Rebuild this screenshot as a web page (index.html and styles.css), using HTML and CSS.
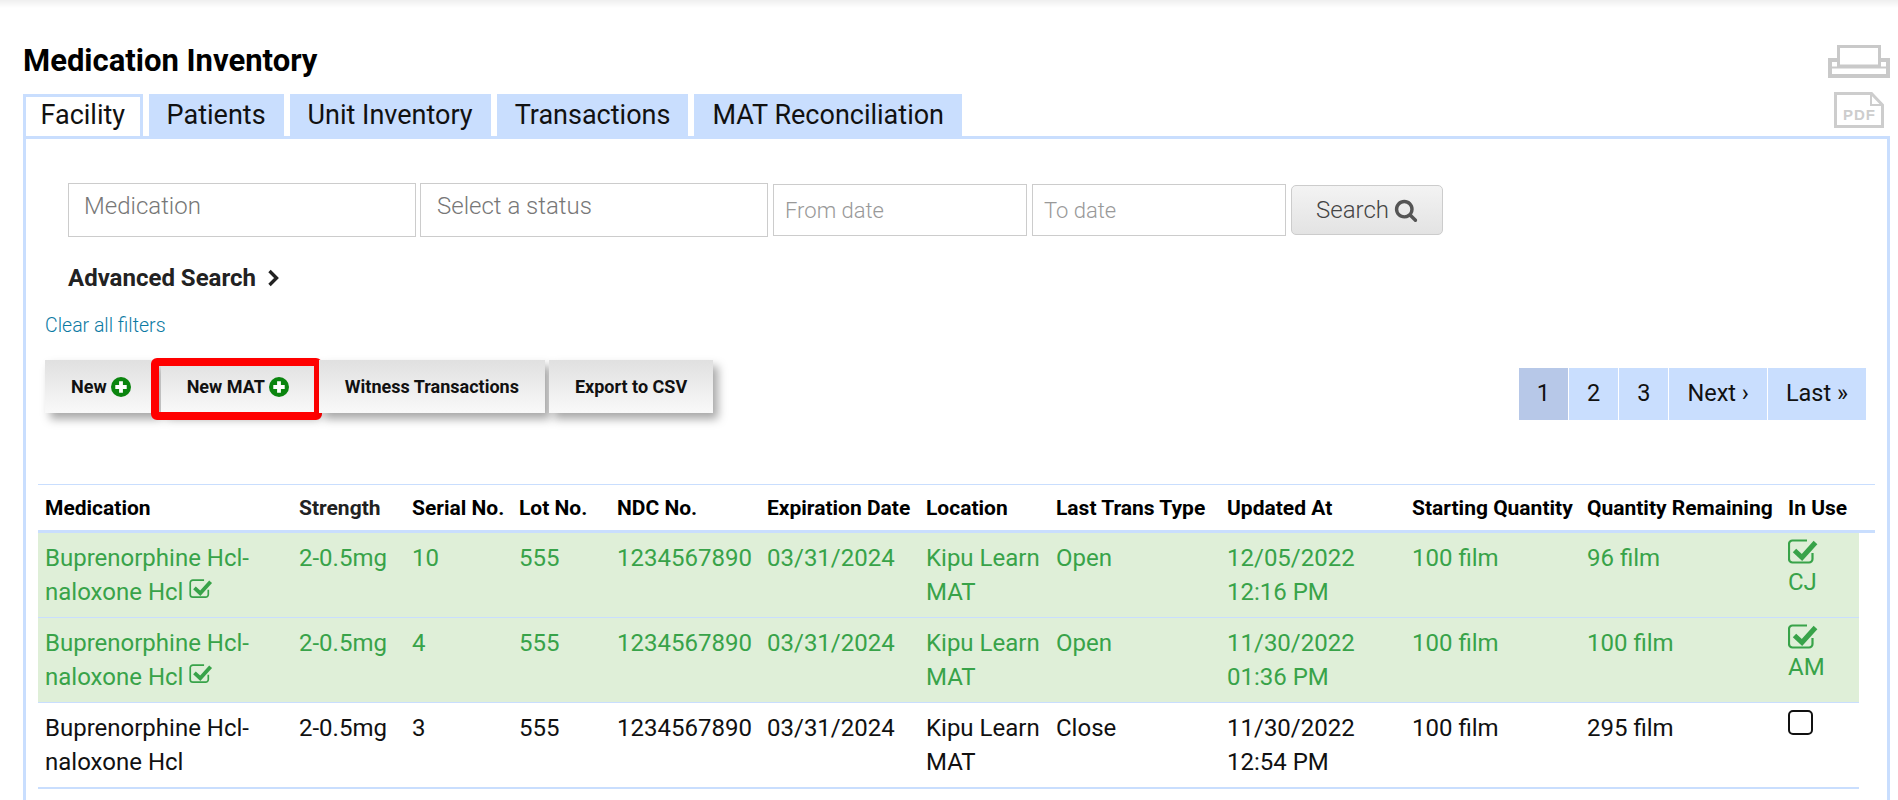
FILE: index.html
```html
<!DOCTYPE html>
<html lang="en">
<head>
<meta charset="utf-8">
<title>Medication Inventory</title>
<link rel="stylesheet" href="styles.css">
</head>
<body>
<svg class="defs" width="0" height="0" aria-hidden="true">
  <symbol id="check" viewBox="0 0 30 26">
    <path d="M24.5 14v6a3.5 3.5 0 0 1-3.5 3.5H4.500a3.500 3.500 0 0 1-3.500-3.500V5a3.500 3.500 0 0 1 3.500-3.500H19" fill="none" stroke="currentColor" stroke-width="2.200"/>
    <path d="M6.500 11.500l7.500 7L27.500 3.500" fill="none" stroke="currentColor" stroke-width="5"/>
  </symbol>
  <symbol id="plus" viewBox="0 0 21 21">
    <circle cx="10.500" cy="10.500" r="10.500" fill="#0b850f"/>
    <path d="M10.500 4.500v12M4.500 10.500h12" stroke="#fff" stroke-width="4"/>
  </symbol>
</svg>
<div class="shade"></div>
<main class="page">
  <header class="head">
    <div class="head-main">
      <h1 class="title">Medication Inventory</h1>
      <nav class="tabs">
        <a class="tab tab-active">Facility</a>
        <a class="tab">Patients</a>
        <a class="tab">Unit Inventory</a>
        <a class="tab">Transactions</a>
        <a class="tab">MAT Reconciliation</a>
      </nav>
    </div>
    <div class="head-tools">
      <svg class="ico-print" viewBox="0 0 62 33" width="62" height="33" aria-hidden="true">
        <path d="M10.500 14V1.500h41V21h-41z" fill="none" stroke="#c9c9c9" stroke-width="3"/>
        <path d="M10 15H2v16h58V15h-8" fill="none" stroke="#c9c9c9" stroke-width="4"/>
        <path d="M4 22.500h54" stroke="#c9c9c9" stroke-width="2"/>
      </svg>
      <svg class="ico-pdf" viewBox="0 0 50 36" width="50" height="36" aria-hidden="true">
        <path d="M1.500 1.500h36L48.500 13v21.500h-47z" fill="none" stroke="#cdcdcd" stroke-width="3"/>
        <path d="M37 2v11h11" fill="none" stroke="#cdcdcd" stroke-width="2"/>
        <text x="25.500" y="28" class="pdf-label">PDF</text>
      </svg>
    </div>
  </header>

  <section class="panel">
    <form class="search">
      <input class="field field-lg" placeholder="Medication">
      <input class="field field-lg" placeholder="Select a status">
      <input class="field field-sm" placeholder="From date">
      <input class="field field-sm" placeholder="To date">
      <button type="button" class="search-btn">Search
        <svg viewBox="0 0 1792 1792" width="24" height="24" aria-hidden="true"><path fill="#555" d="M1216 832q0-185-131.500-316.500T768 384 451.500 515.500 320 832t131.500 316.500T768 1280t316.500-131.500T1216 832zm512 832q0 52-38 90t-90 38q-54 0-90-38l-343-342q-179 124-399 124-143 0-273.500-55.500t-225-150-150-225T64 832t55.500-273.500 150-225 225-150T768 128t273.500 55.500 225 150 150 225T1472 832q0 220-124 399l343 343q37 37 37 90z"/></svg>
      </button>
    </form>
    <div class="advanced">Advanced Search
      <svg viewBox="0 0 13 18" width="13" height="18" aria-hidden="true"><path d="M2.500 2l7 7-7 7" fill="none" stroke="#222" stroke-width="3.400"/></svg>
    </div>
    <a class="clear">Clear all filters</a>

    <div class="toolbar">
      <div class="actions">
        <a class="action">New <svg class="plus"><use href="#plus"/></svg></a>
        <a class="action action-marked">New MAT <svg class="plus"><use href="#plus"/></svg></a>
        <a class="action">Witness Transactions</a>
        <a class="action">Export to CSV</a>
      </div>
      <div class="pager">
        <a class="page-link page-current">1</a>
        <a class="page-link">2</a>
        <a class="page-link">3</a>
        <a class="page-link">Next ›</a>
        <a class="page-link">Last »</a>
      </div>
    </div>

    <table class="grid">
      <colgroup>
        <col class="c-med"><col class="c-str"><col class="c-ser"><col class="c-lot"><col class="c-ndc"><col class="c-exp"><col class="c-loc"><col class="c-typ"><col class="c-upd"><col class="c-sta"><col class="c-rem"><col class="c-use"><col class="c-gut">
      </colgroup>
      <thead>
        <tr>
          <th>Medication</th><th class="th-soft">Strength</th><th>Serial No.</th><th>Lot No.</th><th>NDC No.</th><th>Expiration Date</th><th>Location</th><th>Last Trans Type</th><th>Updated At</th><th>Starting Quantity</th><th>Quantity Remaining</th><th>In Use</th><th></th>
        </tr>
      </thead>
      <tbody>
        <tr class="row-ok">
          <td>Buprenorphine Hcl-naloxone Hcl <svg class="chk-inline"><use href="#check"/></svg></td>
          <td>2-0.5mg</td><td>10</td><td>555</td><td>1234567890</td><td>03/31/2024</td><td>Kipu Learn MAT</td><td>Open</td><td>12/05/2022 12:16 PM</td><td>100 film</td><td>96 film</td>
          <td class="td-use"><svg class="chk-use"><use href="#check"/></svg>CJ</td>
        </tr>
        <tr class="row-ok">
          <td>Buprenorphine Hcl-naloxone Hcl <svg class="chk-inline"><use href="#check"/></svg></td>
          <td>2-0.5mg</td><td>4</td><td>555</td><td>1234567890</td><td>03/31/2024</td><td>Kipu Learn MAT</td><td>Open</td><td>11/30/2022 01:36 PM</td><td>100 film</td><td>100 film</td>
          <td class="td-use"><svg class="chk-use"><use href="#check"/></svg>AM</td>
        </tr>
        <tr class="row-last">
          <td>Buprenorphine Hcl-naloxone Hcl</td>
          <td>2-0.5mg</td><td>3</td><td>555</td><td>1234567890</td><td>03/31/2024</td><td>Kipu Learn MAT</td><td>Close</td><td>11/30/2022 12:54 PM</td><td>100 film</td><td>295 film</td>
          <td class="td-use"><span class="box-empty"></span></td>
        </tr>
      </tbody>
    </table>
  </section>
</main>
</body>
</html>
```

FILE: styles.css
```css
* { box-sizing: border-box; }
html, body { margin: 0; height: 800px; overflow: hidden; background: #fff; }
body { font-family: Roboto, "Liberation Sans", sans-serif; color: #111; }
.defs { position: absolute; }
.shade { height: 8px; background: linear-gradient(#efefef, #fff); }
.page { padding: 0 8px 0 23px; }

.head { display: flex; justify-content: space-between; height: 128px; }
.head-main { display: flex; flex-direction: column; justify-content: space-between; }
.title { margin: 38px 0 0; font-size: 31px; line-height: 30px; font-weight: 700; color: #000; }
.tabs { display: flex; gap: 6px; }
.tab { height: 42px; padding: 0 18px; background: #c9defe; font-size: 27px; line-height: 42px; color: #111; }
.tab-active { background: #fff; border: 3px solid #c9defe; border-bottom: 0; padding: 0 14.500px; line-height: 36px; }
.head-tools { display: flex; flex-direction: column; align-items: flex-end; padding-top: 37px; gap: 14px; }
.ico-pdf { margin-right: 6px; }
.pdf-label { font: 700 15px "Liberation Sans", sans-serif; letter-spacing: 1px; fill: #cdcdcd; text-anchor: middle; }

.panel { height: 664px; border: 3px solid #c9defe; border-bottom: 0; }
.search { display: flex; align-items: center; gap: 5px; padding: 44px 0 0 42px; }
.field { border: 1.500px solid #ccc; background: #fff; font-family: inherit; font-weight: 300; outline: 0; }
.field::placeholder { color: #777; opacity: 1; }
.field-lg { width: 348px; height: 54px; padding: 0 15px 8px; font-size: 24px; }
.field-lg + .field-lg { margin-left: -1px; padding-left: 16px; }
.field-sm { width: 254px; height: 52px; padding: 0 11px; font-size: 22px; }
.field-sm::placeholder { color: #999; }
.search-btn { display: flex; align-items: center; justify-content: center; gap: 5px; width: 152px; height: 50px; padding: 0; border: 1px solid #ccc; border-radius: 5px; background: linear-gradient(#f3f3f3, #e3e3e3); font-family: inherit; font-size: 24px; font-weight: 300; color: #444; }

.advanced { display: flex; align-items: center; gap: 11px; margin: 24px 0 0 42px; height: 34px; font-size: 24px; font-weight: 700; color: #222; }
.clear { display: block; margin: 19px 0 0 19px; height: 24px; line-height: 24px; font-size: 19.500px; font-weight: 300; color: #0b7aa3; }

.toolbar { display: flex; justify-content: space-between; align-items: flex-start; height: 60px; margin: 22px 21px 0 19px; }
.actions { display: flex; gap: 4px; }
.action { position: relative; display: flex; align-items: center; justify-content: center; gap: 4px; height: 53px; padding: 0 26px; background: linear-gradient(#e0e0e0, #f9f9f9); box-shadow: 5px 6px 9px rgba(0, 0, 0, .35); font-size: 18px; font-weight: 700; color: #111; white-space: nowrap; }
.action-marked::after { content: ""; position: absolute; left: -10px; right: -7px; top: -2px; bottom: -7px; border: 8px solid #f00; border-radius: 6px; }
.plus { width: 20px; height: 20px; }
.pager { display: flex; gap: 1px; margin-top: 8px; }
.page-link { height: 52px; min-width: 49px; padding: 0 18px; background: #c9defe; font-size: 23.500px; line-height: 50px; text-align: center; color: #111; }
.page-current { background: #b7c8e8; }

.grid { width: 1837px; margin: 64px 0 0 12px; border-collapse: separate; border-spacing: 0; table-layout: fixed; font-size: 24px; line-height: 34px; }
.c-med { width: 254px; } .c-str { width: 113px; } .c-ser { width: 107px; } .c-lot { width: 98px; }
.c-ndc { width: 150px; } .c-exp { width: 159px; } .c-loc { width: 130px; } .c-typ { width: 171px; }
.c-upd { width: 185px; } .c-sta { width: 175px; } .c-rem { width: 201px; } .c-use { width: 78px; } .c-gut { width: 16px; }
.grid th { height: 49px; padding: 0 7px; border-top: 1px solid #c9defe; border-bottom: 3px solid #c9defe; text-align: left; font-size: 21px; line-height: 24px; font-weight: 700; color: #000; white-space: nowrap; }
.grid .th-soft { color: #222; }
.grid td { height: 85px; padding: 8px 7px; border-bottom: 1px solid #c9defe; vertical-align: top; color: #111; }
.row-ok td { background: #dfefd8; }
.grid .row-ok td { color: #38a349; }
.grid .row-last td { height: 86px; border-bottom-width: 2px; }
.grid .td-use { padding-top: 6px; }
.chk-inline { width: 24px; height: 20px; vertical-align: 1px; }
.chk-use { display: block; width: 30px; height: 26px; }
.box-empty { display: block; width: 25px; height: 25px; margin-top: 1px; border: 2.500px solid #111; border-radius: 5px; }
```
